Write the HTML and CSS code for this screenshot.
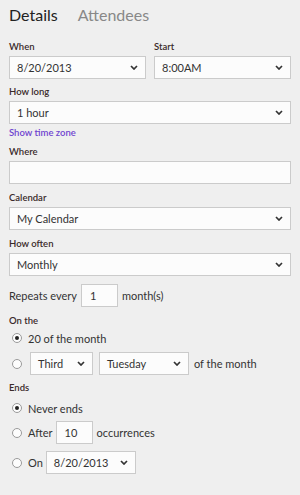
FILE: index.html
```html
<!DOCTYPE html>
<html>
<head>
<meta charset="utf-8">
<link rel="stylesheet" href="styles.css">
</head>
<body>
<div class="page">
  <div class="tabs">
    <span class="tab active">Details</span>
    <span class="tab">Attendees</span>
  </div>

  <div class="row2">
    <div class="field">
      <div class="label">When</div>
      <div class="select"><span>8/20/2013</span><svg class="chev" viewBox="0 0 8 5"><path d="M1 1 L4 4 L7 1" /></svg></div>
    </div>
    <div class="field">
      <div class="label">Start</div>
      <div class="select"><span>8:00AM</span><svg class="chev" viewBox="0 0 8 5"><path d="M1 1 L4 4 L7 1" /></svg></div>
    </div>
  </div>

  <div class="label">How long</div>
  <div class="select"><span>1 hour</span><svg class="chev" viewBox="0 0 8 5"><path d="M1 1 L4 4 L7 1" /></svg></div>
  <div class="link">Show time zone</div>

  <div class="label">Where</div>
  <div class="input"></div>

  <div class="label lower">Calendar</div>
  <div class="select"><span>My Calendar</span><svg class="chev" viewBox="0 0 8 5"><path d="M1 1 L4 4 L7 1" /></svg></div>

  <div class="label lower">How often</div>
  <div class="select"><span>Monthly</span><svg class="chev" viewBox="0 0 8 5"><path d="M1 1 L4 4 L7 1" /></svg></div>

  <div class="inline repeats">
    <span>Repeats every</span>
    <div class="input small"><span>1</span></div>
    <span>month(s)</span>
  </div>

  <div class="label onthe">On the</div>
  <div class="inline radio-row short">
    <span class="radio checked"></span>
    <span>20 of the month</span>
  </div>
  <div class="inline radio-row r2">
    <span class="radio"></span>
    <div class="select third"><span>Third</span><svg class="chev" viewBox="0 0 8 5"><path d="M1 1 L4 4 L7 1" /></svg></div>
    <div class="select tuesday"><span>Tuesday</span><svg class="chev" viewBox="0 0 8 5"><path d="M1 1 L4 4 L7 1" /></svg></div>
    <span>of the month</span>
  </div>

  <div class="label ends">Ends</div>
  <div class="inline radio-row short">
    <span class="radio checked"></span>
    <span>Never ends</span>
  </div>
  <div class="inline radio-row after">
    <span class="radio"></span>
    <span>After</span>
    <div class="input small"><span>10</span></div>
    <span>occurrences</span>
  </div>
  <div class="inline radio-row ondate-row">
    <span class="radio"></span>
    <span>On</span>
    <div class="select ondate"><span>8/20/2013</span><svg class="chev" viewBox="0 0 8 5"><path d="M1 1 L4 4 L7 1" /></svg></div>
  </div>
</div>
</body>
</html>
```
FILE: styles.css
```css
html, body {
  margin: 0;
  padding: 0;
  background: #efefef;
}
body {
  font-family: Lato, "Noto Sans", sans-serif;
  color: #333;
  width: 300px;
  height: 495px;
  overflow: hidden;
}
.page {
  padding: 0 9px;
}
.tabs {
  display: flex;
  gap: 20px;
  height: 29px;
  align-items: center;
}
.tab {
  font-size: 16px;
  color: #888;
}
.tab.active {
  color: #222;
}
.row2 {
  display: grid;
  grid-template-columns: 137px 137px;
  column-gap: 8px;
  margin-top: 11px;
}
.label {
  font-size: 9.5px;
  font-weight: 600;
  color: #3a2a2a;
  height: 13px;
  line-height: 13px;
  margin-top: 6px;
  margin-bottom: 3px;
}
.row2 .label {
  margin-top: 0;
}
.label.lower {
  margin-top: 7px;
}
.select, .input {
  box-sizing: border-box;
  height: 23px;
  background: #fcfcfc;
  border: 1px solid #cbcbcb;
  display: flex;
  align-items: center;
  justify-content: space-between;
  padding: 0 7px 0 7px;
  font-size: 11px;
  color: #333;
}
.chev {
  width: 8px;
  height: 5px;
  flex: none;
}
.chev path {
  fill: none;
  stroke: #333;
  stroke-width: 1.7;
}
.link {
  font-size: 9.5px;
  font-weight: 600;
  color: #7044d0;
  height: 12px;
  line-height: 12px;
  margin-top: 3px;
}
.inline {
  display: flex;
  align-items: center;
  font-size: 11px;
  color: #333;
}
.repeats {
  margin-top: 8px;
  height: 23px;
}
.repeats .input.small {
  margin: 0 4px;
}
.input.small {
  width: 37px;
  padding: 0 8px;
}
.label.onthe {
  margin-top: 7px;
  margin-bottom: 1px;
}
.label.ends {
  margin-bottom: 4px;
}
.radio-row {
  height: 23px;
}
.radio-row.short {
  height: 20px;
}
.radio-row.r2 {
  margin-top: 4px;
}
.radio-row.after {
  margin-top: 3px;
}
.radio-row.ondate-row {
  margin-top: 7px;
}
.radio {
  box-sizing: border-box;
  width: 10px;
  height: 10px;
  border-radius: 50%;
  border: 1px solid #9a9a9a;
  background: #fdfdfd;
  margin-left: 3px;
  margin-right: 6px;
  position: relative;
  flex: none;
}
.radio.checked::after {
  content: "";
  position: absolute;
  left: 2px;
  top: 2px;
  width: 4px;
  height: 4px;
  border-radius: 50%;
  background: #222;
}
.r2 .radio {
  margin-right: 8px;
}
.select.third {
  width: 63px;
  margin-right: 6px;
}
.select.tuesday {
  width: 90px;
  margin-right: 5px;
}
.after .input.small {
  margin: 0 4px 0 3px;
}
.select.ondate {
  width: 90px;
  margin-left: 3px;
}
```
